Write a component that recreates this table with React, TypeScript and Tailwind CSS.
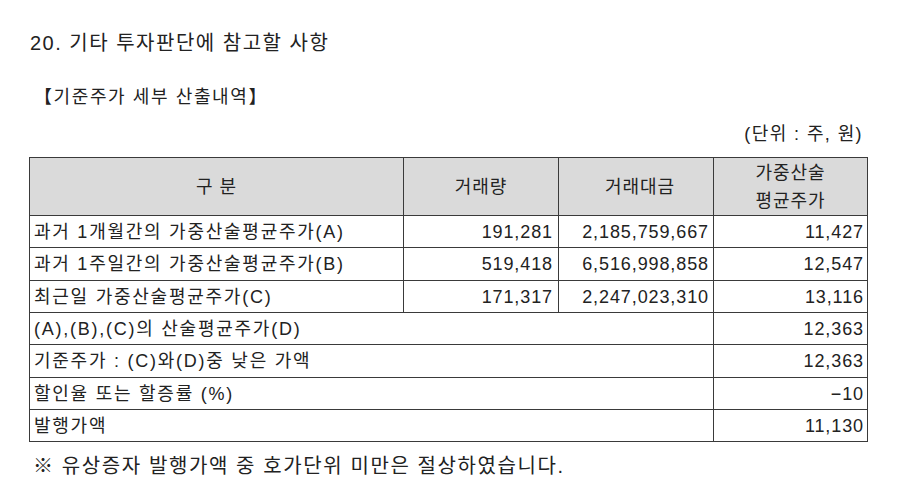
const rows: { label: string; vol?: string; amt?: string; price: string }[] = [
  { label: "과거 1개월간의 가중산술평균주가(A)", vol: "191,281", amt: "2,185,759,667", price: "11,427" },
  { label: "과거 1주일간의 가중산술평균주가(B)", vol: "519,418", amt: "6,516,998,858", price: "12,547" },
  { label: "최근일 가중산술평균주가(C)", vol: "171,317", amt: "2,247,023,310", price: "13,116" },
  { label: "(A),(B),(C)의 산술평균주가(D)", price: "12,363" },
  { label: "기준주가 : (C)와(D)중 낮은 가액", price: "12,363" },
  { label: "할인율 또는 할증률 (%)", price: "−10" },
  { label: "발행가액", price: "11,130" },
];

const cell = "border border-[#3a3a3a] px-0 py-0";

export default function App() {
  return (
    <div className="h-[490px] w-[899px] bg-white font-['Liberation_Sans','Noto_Sans_CJK_KR',sans-serif] text-[#222]">
      <div className="pl-[30px] pt-[31px] text-[20px] leading-[24px] tracking-[1.5px]">
        20. 기타 투자판단에 참고할 사항
      </div>

      <div className="mt-[30px] pl-[34px] text-[18px] leading-[24px] tracking-[1.6px]">
        【기준주가 세부 산출내역】
      </div>

      <div className="mt-[13px] pr-[36px] text-right text-[18px] leading-[24px] tracking-[1.4px]">
        (단위 : 주, 원)
      </div>

      <table className="ml-[29px] mt-[11px] w-[838px] table-fixed border-collapse text-[18px] leading-[24px] tracking-[0.9px]">
        <colgroup>
          <col className="w-[374px]" />
          <col className="w-[155px]" />
          <col className="w-[155px]" />
          <col className="w-[154px]" />
        </colgroup>
        <thead>
          <tr className="h-[58px] bg-[#dadada] text-center">
            <th className={`${cell} font-normal`}>구 분</th>
            <th className={`${cell} font-normal`}>거래량</th>
            <th className={`${cell} pl-[8px] font-normal`}>거래대금</th>
            <th className={`${cell} font-normal leading-[28px]`}>
              가중산술
              <br />
              평균주가
            </th>
          </tr>
        </thead>
        <tbody>
          {rows.map((r, i) => (
            <tr key={i} className={i === 1 || i === 4 ? "h-[33px]" : "h-[32px]"}>
              {r.vol ? (
                <>
                  <td className={`${cell} pl-[4px] text-left tracking-[1.75px]`}>{r.label}</td>
                  <td className={`${cell} pr-[5px] text-right`}>{r.vol}</td>
                  <td className={`${cell} pr-[4px] text-right`}>{r.amt}</td>
                </>
              ) : (
                <td colSpan={3} className={`${cell} pl-[4px] text-left tracking-[1.75px]`}>
                  {r.label}
                </td>
              )}
              <td className={`${cell} pr-[3px] text-right`}>{r.price}</td>
            </tr>
          ))}
        </tbody>
      </table>

      <div className="mt-[12px] pl-[33px] text-[20px] leading-[24px] tracking-[1.6px]">
        ※ 유상증자 발행가액 중 호가단위 미만은 절상하였습니다.
      </div>
    </div>
  );
}
